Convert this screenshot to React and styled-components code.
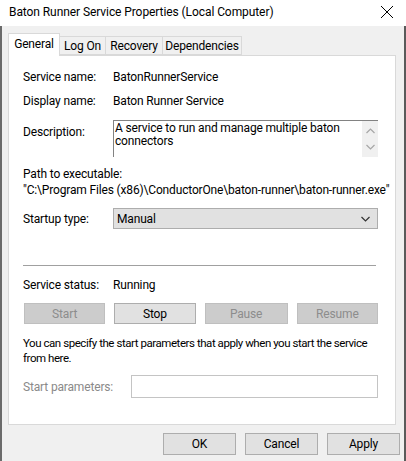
import React from 'react';
import styled, { createGlobalStyle } from 'styled-components';

const Global = createGlobalStyle`
    html, body {
        margin: 0;
        padding: 0;
        background: #f0f0f0;
    }
    * {
        box-sizing: border-box;
    }
`;

// 창 전체
const Window = styled.div`
    display: flex;
    flex-direction: column;
    width: 406px;
    height: 461px;
    overflow: hidden;
    font-family: Roboto, 'Liberation Sans', Arial, sans-serif;
    font-size: 12px;
    letter-spacing: -0.16px;
    color: #000;
    white-space: nowrap;
`;

const TitleBar = styled.div`
    display: flex;
    align-items: center;
    justify-content: space-between;
    height: 26px;
    padding: 0 12px 3px 9px;
    background: #fff;
    font-size: 12px;
    letter-spacing: -0.08px;
`;

const Body = styled.div`
    flex: 1;
    display: flex;
    flex-direction: column;
    padding: 7px 8px 0 6px;
    background: #f0f0f0;
    border-left: 2px solid #6b6b6b;
    border-right: 2px solid #5a5a5a;
`;

const Tabs = styled.div`
    display: flex;
    align-items: flex-end;
    height: 22px;
`;

const Tab = styled.div`
    display: flex;
    align-items: center;
    justify-content: center;
    width: ${(p) => p.w}px;
    height: ${(p) => (p.active ? 23 : 19)}px;
    margin-bottom: ${(p) => (p.active ? -1 : 0)}px;
    background: ${(p) => (p.active ? '#fff' : '#f0f0f0')};
    border: 1px solid #d9d9d9;
    border-bottom: ${(p) => (p.active ? 'none' : '1px solid #d9d9d9')};
    margin-right: -1px;
    position: relative;
    z-index: ${(p) => (p.active ? 1 : 0)};
    padding-bottom: ${(p) => (p.active ? 3 : 0)}px;
`;

const Panel = styled.div`
    display: flex;
    flex-direction: column;
    height: 370px;
    background: #fff;
    border: 1px solid #d9d9d9;
    padding: 13px 17px 0 14px;
`;

const Row = styled.div`
    display: flex;
    align-items: ${(p) => p.align || 'center'};
    height: ${(p) => p.h || 16}px;
    margin-top: ${(p) => p.mt || 0}px;
`;

const Label = styled.div`
    flex-shrink: 0;
    line-height: 16px;
    padding-top: ${(p) => p.pt || 0}px;
    color: ${(p) => (p.disabled ? '#8a8a8a' : '#000')};
    width: ${(p) => p.w || 90}px;
`;

const Value = styled.div`
    line-height: 16px;
`;

const TextBox = styled.div`
    display: flex;
    width: 266px;
    height: 37px;
    border: 1px solid #828282;
    border-right: none;
    border-bottom: none;
`;

const TextContent = styled.div`
    flex: 1;
    padding: 1px 0 0 1px;
    line-height: 13px;
`;

const ScrollBar = styled.div`
    width: 16px;
    display: flex;
    flex-direction: column;
    align-items: center;
    justify-content: space-around;
    padding: 2px 0;
    background: #f0f0f0;
`;

const Text = styled.div`
    line-height: 16px;
    margin-top: ${(p) => p.mt || 0}px;
`;

const Select = styled.div`
    display: flex;
    align-items: center;
    justify-content: space-between;
    width: 266px;
    height: 21px;
    padding: 0 7px 0 3px;
    background: #e1e1e1;
    border: 1px solid #adadad;
`;

const Separator = styled.div`
    height: 1px;
    width: 353px;
    background: #a0a0a0;
    margin-top: 36px;
`;

const ButtonRow = styled.div`
    display: flex;
    gap: 9px;
    margin-top: ${(p) => p.mt || 0}px;
    padding-left: ${(p) => p.pl || 0}px;
`;

const Button = styled.div`
    display: flex;
    align-items: center;
    justify-content: center;
    width: ${(p) => p.w || 82}px;
    height: ${(p) => p.h || 21}px;
    background: ${(p) => (p.disabled ? '#cccccc' : '#e1e1e1')};
    border: 1px solid ${(p) => (p.disabled ? '#bfbfbf' : '#adadad')};
    color: ${(p) => (p.disabled ? '#8d8d8d' : '#000')};
`;

const Note = styled.div`
    line-height: 15px;
    margin-top: 12px;
    font-size: 11.5px;
    letter-spacing: -0.45px;
`;

const Input = styled.div`
    width: 249px;
    height: 23px;
    border: 1px solid #c4c4c4;
    background: #fff;
`;

const Footer = styled.div`
    display: flex;
    justify-content: flex-end;
    gap: 9px;
    margin-top: 8px;
    margin-right: -4px;
`;

const CloseIcon = () => (
    <svg width="14" height="14" viewBox="0 0 14 14">
        <path d="M1 1 L13 13 M13 1 L1 13" stroke="#000" strokeWidth="1" fill="none" />
    </svg>
);

const Chevron = ({ up, color = '#a6a6a6' }) => (
    <svg width="9" height="6" viewBox="0 0 9 6">
        <path
            d={up ? 'M0.5 5 L4.5 1 L8.5 5' : 'M0.5 1 L4.5 5 L8.5 1'}
            stroke={color}
            strokeWidth="1.2"
            fill="none"
        />
    </svg>
);

export default function App() {
    return (
        <Window>
            <Global />
            <TitleBar>
                <span>Baton Runner Service Properties (Local Computer)</span>
                <CloseIcon />
            </TitleBar>
            <Body>
                {/* 탭 */}
                <Tabs>
                    <Tab active w={52}>General</Tab>
                    <Tab w={47}>Log On</Tab>
                    <Tab w={58}>Recovery</Tab>
                    <Tab w={80}>Dependencies</Tab>
                </Tabs>

                <Panel>
                    <Row>
                        <Label>Service name:</Label>
                        <Value>BatonRunnerService</Value>
                    </Row>
                    <Row mt={8}>
                        <Label>Display name:</Label>
                        <Value>Baton Runner Service</Value>
                    </Row>
                    <Row mt={11} h={37} align="flex-start">
                        <Label pt={4}>Description:</Label>
                        <TextBox>
                            <TextContent>
                                A service to run and manage multiple baton
                                <br />
                                connectors
                            </TextContent>
                            <ScrollBar>
                                <Chevron up />
                                <Chevron />
                            </ScrollBar>
                        </TextBox>
                    </Row>
                    <Text mt={9}>Path to executable:</Text>
                    <Text>"C:\Program Files (x86)\ConductorOne\baton-runner\baton-runner.exe"</Text>
                    <Row mt={10} h={21}>
                        <Label>Startup type:</Label>
                        <Select>
                            <span>Manual</span>
                            <Chevron color="#333" />
                        </Select>
                    </Row>

                    <Separator />

                    <Row mt={11}>
                        <Label>Service status:</Label>
                        <Value>Running</Value>
                    </Row>
                    <ButtonRow mt={10} pl={1}>
                        <Button disabled>Start</Button>
                        <Button>Stop</Button>
                        <Button disabled w={84}>Pause</Button>
                        <Button disabled>Resume</Button>
                    </ButtonRow>

                    <Note>
                        You can specify the start parameters that apply when you start the service
                        <br />
                        from here.
                    </Note>

                    <Row mt={9} h={23}>
                        <Label disabled w={108}>Start parameters:</Label>
                        <Input />
                    </Row>
                </Panel>

                <Footer>
                    <Button w={73} h={22}>OK</Button>
                    <Button w={73} h={22}>Cancel</Button>
                    <Button w={73} h={22}>Apply</Button>
                </Footer>
            </Body>
        </Window>
    );
}
